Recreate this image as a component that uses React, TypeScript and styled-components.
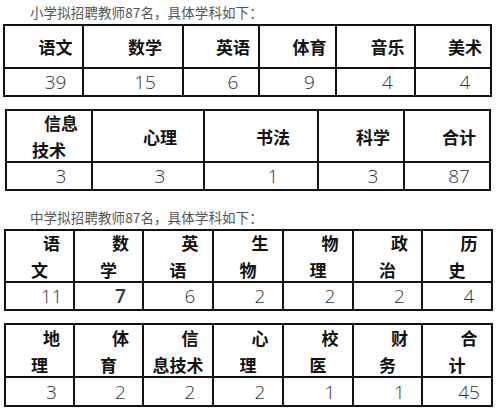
import React from 'react';
import styled, { createGlobalStyle } from 'styled-components';

const GlobalStyle = createGlobalStyle`
  body {
    margin: 0;
    background: #fff;
  }
`;

type Cell = { head: string[]; value: string; strong?: boolean };

type TableData = {
  cols: number[];
  headH: number;
  dataH: number;
  left: number;
  cells: Cell[];
};

const primary: TableData[] = [
  {
    cols: [79, 100, 76, 77, 79, 76],
    headH: 43,
    dataH: 28,
    left: 3,
    cells: [
      { head: ['语文'], value: '39' },
      { head: ['数学'], value: '15' },
      { head: ['英语'], value: '6' },
      { head: ['体育'], value: '9' },
      { head: ['音乐'], value: '4' },
      { head: ['美术'], value: '4' },
    ],
  },
  {
    cols: [86, 112, 114, 86, 86],
    headH: 52,
    dataH: 28,
    left: 5,
    cells: [
      { head: ['信息', '技术'], value: '3' },
      { head: ['心理'], value: '3' },
      { head: ['书法'], value: '1' },
      { head: ['科学'], value: '3' },
      { head: ['合计'], value: '87' },
    ],
  },
];

const seven = [69, 69, 70, 70, 70, 69, 70];

const middle: TableData[] = [
  {
    cols: seven,
    headH: 52,
    dataH: 28,
    left: 4,
    cells: [
      { head: ['语', '文'], value: '11' },
      { head: ['数', '学'], value: '7', strong: true },
      { head: ['英', '语'], value: '6' },
      { head: ['生', '物'], value: '2' },
      { head: ['物', '理'], value: '2' },
      { head: ['政', '治'], value: '2' },
      { head: ['历', '史'], value: '4' },
    ],
  },
  {
    cols: seven,
    headH: 53,
    dataH: 29,
    left: 4,
    cells: [
      { head: ['地', '理'], value: '3' },
      { head: ['体', '育'], value: '2' },
      { head: ['信', '息技术'], value: '2' },
      { head: ['心', '理'], value: '2' },
      { head: ['校', '医'], value: '1' },
      { head: ['财', '务'], value: '1' },
      { head: ['合', '计'], value: '45' },
    ],
  },
];

const SubjectTable = ({ data }: { data: TableData }) => (
  <Grid
    $cols={data.cols.map((c) => `${c}px`).join(' ')}
    $rows={`${data.headH}px ${data.dataH}px`}
    $left={data.left}
  >
    {data.cells.map((c, i) => (
      <HeadCell key={`h${i}`}>
        <Label>
          {c.head.map((line, j) => (
            <React.Fragment key={j}>
              {j > 0 && <br />}
              {line}
            </React.Fragment>
          ))}
        </Label>
      </HeadCell>
    ))}
    {data.cells.map((c, i) => (
      <DataCell key={`d${i}`} $strong={c.strong}>
        <Label>{c.value}</Label>
      </DataCell>
    ))}
  </Grid>
);

const App = () => (
  <Page>
    <GlobalStyle />
    <Title>小学拟招聘教师87名，具体学科如下：</Title>
    <SubjectTable data={primary[0]} />
    <Spacer $h={12} />
    <SubjectTable data={primary[1]} />
    <Spacer $h={14} />
    <Title>中学拟招聘教师87名，具体学科如下：</Title>
    <SubjectTable data={middle[0]} />
    <Spacer $h={12} />
    <SubjectTable data={middle[1]} />
  </Page>
);

const Page = styled.div`
  width: 499px;
  height: 413px;
  display: flex;
  flex-direction: column;
  background: #fff;
  overflow: hidden;
`;

const Title = styled.div`
  height: 24px;
  line-height: 24px;
  padding-left: 30px;
  font-family: 'Noto Sans CJK SC', 'Noto Sans', sans-serif;
  font-size: 13.5px;
  letter-spacing: 0.1px;
  color: #555;
  white-space: nowrap;
`;

const Spacer = styled.div<{ $h: number }>`
  height: ${(p) => p.$h}px;
  flex: none;
`;

const Grid = styled.div<{ $cols: string; $rows: string; $left: number }>`
  display: grid;
  grid-template-columns: ${(p) => p.$cols};
  grid-template-rows: ${(p) => p.$rows};
  margin-left: ${(p) => p.$left}px;
  align-self: flex-start;
  border-top: 2px solid #111;
  border-left: 2px solid #111;
`;

const BaseCell = styled.div`
  display: flex;
  align-items: center;
  justify-content: center;
  border-right: 2px solid #111;
  border-bottom: 2px solid #111;
  box-sizing: border-box;
  overflow: visible;
`;

const HeadCell = styled(BaseCell)`
  font-family: 'Noto Sans CJK SC', 'Noto Sans', sans-serif;
  font-weight: 700;
  font-size: 17px;
  line-height: 27px;
  color: #111;
`;

const DataCell = styled(BaseCell)<{ $strong?: boolean }>`
  font-family: 'Open Sans', 'Liberation Sans', sans-serif;
  font-weight: ${(p) => (p.$strong ? 600 : 300)};
  font-size: 19px;
  line-height: 24px;
  color: #333;
`;

const Label = styled.div`
  text-align: center;
  text-indent: 24px;
  white-space: nowrap;
`;

export default App;
